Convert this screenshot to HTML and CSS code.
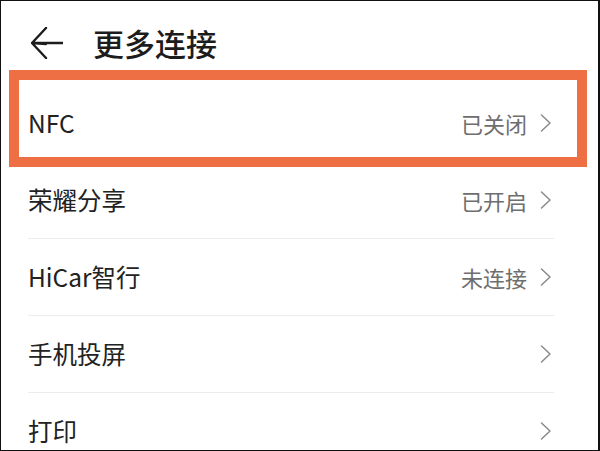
FILE: index.html
```html
<!DOCTYPE html>
<html lang="zh-CN">
<head>
<meta charset="utf-8">
<link rel="stylesheet" href="styles.css">
</head>
<body>
<div class="frame">
  <header class="header">
    <svg class="back" width="32" height="32" viewBox="0 0 32 32" aria-hidden="true">
      <path d="M15 17 L1 16 L15 1 M1.5 16 H32 M1 16 L15 31" fill="none" stroke="#1c1c1c" stroke-width="2.4" stroke-linecap="round" stroke-linejoin="round"/>
    </svg>
    <h1 class="title">更多连接</h1>
  </header>
  <ul class="list">
    <li class="row row-highlight">
      <span class="label">NFC</span>
      <span class="value">已关闭<svg class="chev" width="12" height="18" viewBox="0 0 12 18"><path d="M1.5 1 L10 9 L1.5 17" fill="none" stroke="#8a8a8a" stroke-width="1.5" stroke-linecap="round" stroke-linejoin="round"/></svg></span>
      <span class="highlight" aria-hidden="true"></span>
    </li>
    <li class="row">
      <span class="label">荣耀分享</span>
      <span class="value">已开启<svg class="chev" width="12" height="18" viewBox="0 0 12 18"><path d="M1.5 1 L10 9 L1.5 17" fill="none" stroke="#8a8a8a" stroke-width="1.5" stroke-linecap="round" stroke-linejoin="round"/></svg></span>
    </li>
    <li class="row">
      <span class="label">HiCar智行</span>
      <span class="value">未连接<svg class="chev" width="12" height="18" viewBox="0 0 12 18"><path d="M1.5 1 L10 9 L1.5 17" fill="none" stroke="#8a8a8a" stroke-width="1.5" stroke-linecap="round" stroke-linejoin="round"/></svg></span>
    </li>
    <li class="row">
      <span class="label">手机投屏</span>
      <span class="value"><svg class="chev" width="12" height="18" viewBox="0 0 12 18"><path d="M1.5 1 L10 9 L1.5 17" fill="none" stroke="#8a8a8a" stroke-width="1.5" stroke-linecap="round" stroke-linejoin="round"/></svg></span>
    </li>
    <li class="row">
      <span class="label">打印</span>
      <span class="value"><svg class="chev" width="12" height="18" viewBox="0 0 12 18"><path d="M1.5 1 L10 9 L1.5 17" fill="none" stroke="#8a8a8a" stroke-width="1.5" stroke-linecap="round" stroke-linejoin="round"/></svg></span>
    </li>
  </ul>
</div>
</body>
</html>
```
FILE: styles.css
```css
html, body {
  margin: 0;
  padding: 0;
  background: #fff;
}
body {
  width: 600px;
  height: 451px;
  overflow: hidden;
  font-family: "Noto Sans CJK SC", "Noto Sans", sans-serif;
}
.frame {
  box-sizing: border-box;
  width: 600px;
  height: 451px;
  border: 1px solid #111;
  border-right-width: 2px;
  overflow: hidden;
  position: relative;
}
.header {
  height: 84px;
  display: flex;
  align-items: center;
  padding-left: 30px;
  box-sizing: border-box;
  padding-bottom: 1px;
}
.back {
  display: block;
  flex: none;
}
.title {
  margin: 0 0 0 30px;
  font-size: 31px;
  font-weight: 500;
  color: #1c1c1c;
  letter-spacing: 0;
  line-height: 1;
}
.list {
  list-style: none;
  margin: 0;
  padding: 0;
}
.row {
  position: relative;
  height: 77px;
  margin: 0 44px 0 27px;
  display: flex;
  align-items: center;
  justify-content: space-between;
  border-bottom: 1px solid #ececec;
  box-sizing: border-box;
}
.label {
  font-size: 24.5px;
  color: #222;
  line-height: 1;
}
.value {
  display: flex;
  align-items: center;
  font-size: 22px;
  color: #6e6e6e;
  line-height: 1;
}
.chev {
  display: block;
  margin-left: 13px;
  margin-right: 2px;
}
.highlight {
  position: absolute;
  left: -19px;
  right: -33px;
  top: -15px;
  bottom: -6px;
  border: 10px solid #ee6f44;
  pointer-events: none;
}
```
